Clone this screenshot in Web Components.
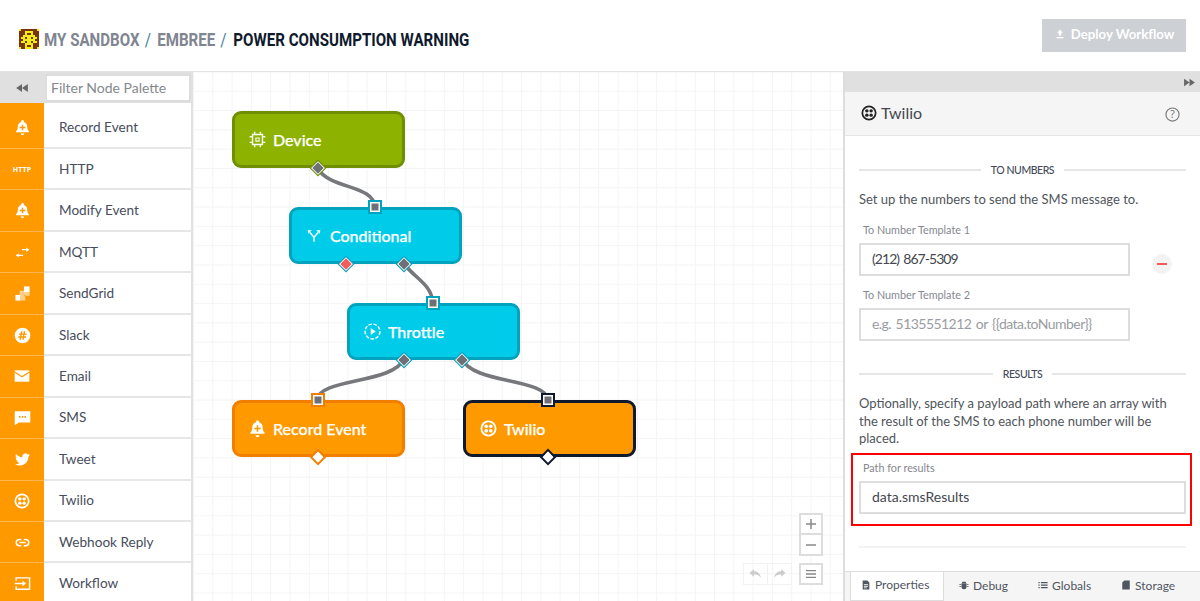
<!DOCTYPE html>
<html>
<head>
<meta charset="utf-8">
<title>Power Consumption Warning</title>
<style>
  html, body { margin: 0; height: 100%; overflow: hidden; background: #fff; }
  body { font-family: "Lato", "Noto Sans", sans-serif; }
</style>
</head>
<body>
<workflow-app></workflow-app>

<script>
// Icon set shared by the palette, nodes and panels (24x24 boxes)
const ICONS = {
  bell: '<path fill="currentColor" fill-rule="evenodd" d="M12 1.500a2 2 0 0 1 2 2v.6c3 .9 4.600 3.500 4.600 6.600 0 3.400.8 5.200 2.400 6.600v1.400H3v-1.400c1.600-1.400 2.400-3.200 2.400-6.600 0-3.100 1.600-5.700 4.600-6.600v-.6a2 2 0 0 1 2-2zM11 8v3H8v2h3v3h2v-3h3v-2h-3V8z"/><path fill="currentColor" d="M9.500 20.500h5a2.500 2.500 0 0 1-5 0z"/>',
  arrows: '<path fill="currentColor" d="M11 6.500h7V4l5 3.500L18 11V8.500h-7zM13 15.500H6V13l-5 3.500L6 20v-2.500h7z"/>',
  sendgrid: '<path fill="currentColor" d="M14 2h8v8h-8z"/><path fill="currentColor" opacity=".55" d="M8 8h6v7H8zM14 10h8v5h-6v-1h-2z"/><path fill="currentColor" d="M2 14h7v8H2z"/><path fill="currentColor" opacity=".55" d="M9 15h7v7H9z"/>',
  slack: '<path fill="currentColor" fill-rule="evenodd" d="M12 1a11 11 0 1 1 0 22 11 11 0 0 1 0-22zM10 6l-.6 3H7v2h2l-.4 2H6v2h2.200L7.700 18h2l.5-3h2l-.5 3h2l.5-3H17v-2h-2.400l.4-2H18V9h-2.600l.6-3h-2l-.6 3h-2l.6-3zm1 5h2l-.4 2h-2z"/>',
  mail: '<path fill="currentColor" d="M1 3.500h22v17H1z"/><path fill="none" stroke="#ff9900" stroke-width="1.800" d="M1 6l11 7 11-7"/>',
  chat: '<path fill="currentColor" fill-rule="evenodd" d="M1 3h22v16H7l-6 4zM7 10v2.200h2.200V10zm3.900 0v2.200h2.200V10zm3.900 0v2.200H17V10z"/>',
  twitter: '<path fill="currentColor" d="M23.953 4.570a10 10 0 01-2.825.775 4.958 4.958 0 002.163-2.723c-.951.555-2.005.959-3.127 1.184a4.920 4.920 0 00-8.384 4.482C7.690 8.095 4.067 6.130 1.640 3.162a4.822 4.822 0 00-.666 2.475c0 1.710.870 3.213 2.188 4.096a4.904 4.904 0 01-2.228-.616v.060a4.923 4.923 0 003.946 4.827 4.996 4.996 0 01-2.212.085 4.936 4.936 0 004.604 3.417 9.867 9.867 0 01-6.102 2.105c-.390 0-.779-.023-1.170-.067a13.995 13.995 0 007.557 2.209c9.053 0 13.998-7.496 13.998-13.985 0-.210 0-.420-.015-.630A9.935 9.935 0 0024 4.590z"/>',
  twilio: '<circle cx="12" cy="12" r="10" fill="none" stroke="currentColor" stroke-width="2.600"/><g fill="currentColor"><circle cx="8.800" cy="8.800" r="2.600"/><circle cx="15.200" cy="8.800" r="2.600"/><circle cx="8.800" cy="15.200" r="2.600"/><circle cx="15.200" cy="15.200" r="2.600"/></g>',
  link: '<path fill="none" stroke="currentColor" stroke-width="2.400" d="M10 7H7a5 5 0 0 0 0 10h3M14 7h3a5 5 0 0 1 0 10h-3M7 12h10"/>',
  workflow: '<path fill="none" stroke="currentColor" stroke-width="2" d="M3 8V4h19v16H3v-4"/><path fill="currentColor" d="M1 11h11V8l5 4-5 4v-3H1z"/>',
  chip: '<path fill="none" stroke="currentColor" stroke-width="2" d="M5 5h14v14H5z"/><path fill="currentColor" d="M9 9h6v6H9zM7 1h2v3H7zM15 1h2v3h-2zM7 20h2v3H7zM15 20h2v3h-2zM1 7h3v2H1zM1 15h3v2H1zM20 7h3v2h-3zM20 15h3v2h-3z"/><path fill="#8db300" d="M10.500 10.500h3v3h-3z"/>',
  split: '<path fill="none" stroke="currentColor" stroke-width="2.400" d="M12 22v-8L5 6M12 14l7-8"/><path fill="currentColor" d="M1 2h7L2.500 8zM23 2h-7l5.500 6z"/>',
  throttle: '<circle cx="12" cy="12" r="10.500" fill="none" stroke="currentColor" stroke-width="2" stroke-dasharray="5 2.200"/><path fill="currentColor" d="M9.500 7l7 5-7 5z"/>',
  upload: '<path fill="currentColor" d="M12 3l6 6.500h-3.500V15h-5V9.500H6zM5 18h14v2.500H5z"/>',
  rewind: '<path fill="currentColor" d="M12 5v14L2 12zM22 5v14l-10-7z"/>',
  forward: '<path fill="currentColor" d="M2 5v14l10-7zM12 5v14l10-7z"/>',
  doc: '<path fill="currentColor" fill-rule="evenodd" d="M4 1h11l5 5v17H4zM7 10v2h10v-2zm0 4v2h10v-2zm0 4v2h7v-2z"/>',
  bug: '<path fill="currentColor" d="M8 4h8l1 3H7zM6 8h12v8a6 6 0 0 1-12 0zM1 10h4v2H1zM19 10h4v2h-4zM1 15h4v2H1zM19 15h4v2h-4z"/>',
  list: '<path fill="currentColor" d="M1 5h3v2.500H1zM7 5h16v2.500H7zM1 11h3v2.500H1zM7 11h16v2.500H7zM1 17h3v2.500H1zM7 17h16v2.500H7z"/>',
  card: '<path fill="currentColor" d="M8 1h13v22H3V6z"/>',
  undo: '<path fill="currentColor" d="M9 6V2L1 9l8 7v-4c5-.5 9 .5 13 6-1-7-6-12-13-12z"/>',
  redo: '<path fill="currentColor" d="M15 6V2l8 7-8 7v-4c-5-.5-9 .5-13 6 1-7 6-12 13-12z"/>'
};

class NodeIcon extends HTMLElement {
  connectedCallback() {
    const size = this.getAttribute('size') || 16;
    this.attachShadow({ mode: 'open' }).innerHTML = `
      <style>
        :host { display: inline-flex; width: ${size}px; height: ${size}px; flex: none; }
        svg { width: 100%; height: 100%; display: block; }
      </style>
      <svg viewBox="0 0 24 24">${ICONS[this.getAttribute('name')] || ''}</svg>`;
  }
}

class AppHeader extends HTMLElement {
  connectedCallback() {
    // pixel avatar for the sandbox, 10x10 cells
    const cells = ['y........y', '...yyyy...', '...y..y...', '..yyyyyy..', '.yy.yy.yy.', '..yyyyyy..', '.yy.yy.yy.', '...yyyy...', '...y..y...', 'y..yyyy..y'];
    const rects = cells.map((row, y) => [...row].map((c, x) => c === 'y' ? `<rect x="${x}" y="${y}" width="1" height="1"/>` : '').join('')).join('');
    this.attachShadow({ mode: 'open' }).innerHTML = `
      <style>
        :host {
          display: flex; align-items: center; height: 71px; box-sizing: content-box;
          padding: 0 14px 0 19px; border-bottom: 1px solid #e4e4e4;
        }
        .avatar { width: 20px; height: 20px; margin: 7px 5px 0 0; flex: none; }
        .crumbs {
          display: flex; align-items: center; flex: 1; margin-top: 7px;
          font: 700 18px "Roboto", sans-serif; transform: scaleX(.84); transform-origin: 0 50%;
          color: #7f8591;
        }
        .sep { color: #3f7f9e; margin: 0 7.500px 0 6px; font-weight: 400; }
        .sep.end { margin-right: 8px; }
        .last { color: #0f1a2e; }
        button {
          display: flex; align-items: center; gap: 2px; justify-content: center;
          width: 144px; height: 33px; margin-top: -1px; border: 0; padding: 0 0 2px;
          background: #cdd0d4; color: #fff;
          font: 700 13.200px "Lato", sans-serif;
        }
      </style>
      <svg class="avatar" viewBox="0 0 10 10" shape-rendering="crispEdges"><rect width="10" height="10" fill="#7a3505"/><g fill="#f2ee1a">${rects}</g></svg>
      <div class="crumbs">
        <span>MY SANDBOX</span><span class="sep">/</span>
        <span>EMBREE</span><span class="sep end">/</span>
        <span class="last">POWER CONSUMPTION WARNING</span>
      </div>
      <button><node-icon name="upload" size="12"></node-icon>&nbsp;Deploy Workflow</button>`;
  }
}

class PaletteItem extends HTMLElement {
  connectedCallback() {
    const icon = this.getAttribute('icon');
    this.attachShadow({ mode: 'open' }).innerHTML = `
      <style>
        :host {
          display: grid; grid-template-columns: 44px 1fr; align-items: stretch;
          height: 41.45px; box-sizing: border-box;
          border-bottom: 2px solid #e6e6e6;
          font-size: 13.600px; color: #474d5c;
        }
        .icon {
          display: flex; align-items: center; justify-content: center;
          background: #ff9900; color: #fff; margin-bottom: -2px; border-bottom: 1px solid #ffb84d;
          font: 700 7px "Noto Sans", sans-serif; letter-spacing: .2px;
        }
        .name { display: flex; align-items: center; padding-left: 15px; }
      </style>
      <div class="icon">${icon === 'http' ? 'HTTP' : `<node-icon name="${icon}" size="${this.getAttribute('size') || 16}"></node-icon>`}</div>
      <div class="name"><slot></slot></div>`;
  }
}

class NodePalette extends HTMLElement {
  connectedCallback() {
    this.attachShadow({ mode: 'open' }).innerHTML = `
      <style>
        :host {
          display: flex; flex-direction: column; width: 193px; box-sizing: border-box;
          border-right: 2px solid #e2e2e2; overflow: hidden; background: #fff;
        }
        .top { display: flex; height: 31px; background: #e0e0e0; flex: none; }
        .toggle { display: flex; align-items: center; justify-content: center; width: 44px; color: #666; }
        .filter {
          flex: 1; min-width: 0; margin: 2px 0 0 1px; height: 28px; box-sizing: border-box; background: #fff;
          border: 2px solid #ddd; padding: 0 4px; line-height: 23px;
          font-size: 14px; color: #85888f; white-space: nowrap; overflow: hidden;
        }
        .list { padding-top: 4.600px; background: linear-gradient(90deg, #ff9900 44px, #fff 44px); }
      </style>
      <div class="top">
        <div class="toggle"><node-icon name="rewind" size="14"></node-icon></div>
        <div class="filter">Filter Node Palette</div>
      </div>
      <div class="list"><slot></slot></div>`;
  }
}

// a node of the diagram: its place on the canvas is given by x / y
class FlowNode extends HTMLElement {
  connectedCallback() {
    const x = this.getAttribute('x'), y = this.getAttribute('y');
    const ports = JSON.parse(this.getAttribute('ports') || '[]');
    const html = ports.map(p => `<span class="port ${p.type}" style="left:${p.at}px"></span>`).join('');
    this.attachShadow({ mode: 'open' }).innerHTML = `
      <style>
        :host {
          position: absolute; left: ${x}px; top: ${y}px; width: 173px; height: 57px;
          box-sizing: border-box; border-radius: 9px; border: 3px solid var(--edge);
          background: var(--fill); color: #fff;
          display: flex; align-items: center; gap: 8px; padding: 0 0 0 14px;
          font-size: 16px; font-weight: 500; -webkit-text-stroke: .25px #fff;
        }
        :host([kind=device]) { --fill: #8db300; --edge: #6f8e00; }
        :host([kind=logic]) { --fill: #00ccea; --edge: #00a3bd; }
        :host([kind=output]) { --fill: #ff9900; --edge: #f27e00; }
        :host([kind=selected]) { --fill: #ff9900; --edge: #0f1a2e; }
        .ico { display: flex; justify-content: center; width: 16px; }
        .port { position: absolute; box-sizing: border-box; background: #6f7075; }
        .in {
          top: -10px; width: 14px; height: 14px; margin-left: -7px;
          border: 2px solid var(--edge); box-shadow: inset 0 0 0 1.500px #fff;
        }
        .out {
          bottom: -8px; width: 10px; height: 10px; margin-left: -5px; transform: rotate(45deg);
          border: 1px solid #fff; outline: 1px solid var(--edge);
        }
        .out.free {
          background: #fff; border: 0; width: 8px; height: 8px; bottom: -7px; margin-left: -4px;
          outline-width: 2px;
        }
        .fail { background: #f25c5c; }
      </style>
      <span class="ico"><node-icon name="${this.getAttribute('icon')}" size="${this.getAttribute('icon-size') || 16}"></node-icon></span>
      <span><slot></slot></span>
      ${html}`;
  }
}

class CanvasControls extends HTMLElement {
  connectedCallback() {
    this.attachShadow({ mode: 'open' }).innerHTML = `
      <style>
        :host {
          position: absolute; right: 20px; bottom: 16px;
          display: flex; align-items: flex-end; gap: 7px; color: #888;
        }
        .col { display: flex; flex-direction: column; gap: 7px; }
        .btn {
          width: 24px; height: 22px; box-sizing: border-box; border: 2px solid #ddd; background: #fff;
          display: flex; align-items: center; justify-content: center;
        }
        .zoom { display: flex; flex-direction: column; }
        .zoom .btn + .btn { margin-top: -2px; height: 23px; }
        .history { display: flex; color: #ccc; }
        .history .btn { border: 1px solid #f2f2f2; background: transparent; width: 25px; }
        .history .btn + .btn { margin-left: -1px; }
        svg { width: 12px; height: 12px; }
      </style>
      <div class="history">
        <div class="btn"><node-icon name="undo" size="13"></node-icon></div>
        <div class="btn"><node-icon name="redo" size="13"></node-icon></div>
      </div>
      <div class="col">
        <div class="zoom">
          <div class="btn"><svg viewBox="0 0 12 12"><path fill="currentColor" d="M5.250 1h1.500v10h-1.500zM1 5.250h10v1.500H1z"/></svg></div>
          <div class="btn"><svg viewBox="0 0 12 12"><path fill="currentColor" d="M1 5.250h10v1.500H1z"/></svg></div>
        </div>
        <div class="btn"><svg viewBox="0 0 12 12"><path fill="currentColor" d="M1 2h10v1.300H1zM1 5.350h10v1.300H1zM1 8.700h10V10H1z"/></svg></div>
      </div>`;
  }
}

class FlowCanvas extends HTMLElement {
  connectedCallback() {
    this.attachShadow({ mode: 'open' }).innerHTML = `
      <style>
        :host {
          display: block; position: relative; flex: 1; min-width: 0; overflow: hidden;
          background-color: #fff;
          background-image: linear-gradient(#f4f4f4 1px, transparent 1px), linear-gradient(90deg, #f4f4f4 1px, transparent 1px);
          background-size: 19.3px 19.3px; background-position: 0 -0.500px;
        }
        svg { position: absolute; inset: 0; width: 100%; height: 100%; }
      </style>
      <svg fill="none" stroke="#77787c" stroke-width="3.600" stroke-linecap="round">
        <path d="M124 96C138 118 180 112 182 135"/>
        <path d="M211 192C224 208 238 212 240 231"/>
        <path d="M211 287C200 312 126 306 124 328"/>
        <path d="M269 287C280 312 353 306 355 328"/>
      </svg>
      <slot></slot>
      <canvas-controls></canvas-controls>`;
  }
}

class SectionTitle extends HTMLElement {
  connectedCallback() {
    this.attachShadow({ mode: 'open' }).innerHTML = `
      <style>
        :host {
          display: flex; align-items: center; gap: 10px; height: 16px;
          font-size: 10.500px; font-weight: 500; letter-spacing: -.45px; color: #444a58;
        }
        :host::before, :host::after { content: ""; flex: 1; height: 2px; background: #e6e6e6; }
      </style>
      <slot></slot>`;
  }
}

class TextField extends HTMLElement {
  connectedCallback() {
    const value = this.getAttribute('value');
    const spacing = this.getAttribute('spacing') || 0;
    this.attachShadow({ mode: 'open' }).innerHTML = `
      <style>
        :host { display: block; }
        label { display: block; padding-left: 4px; height: 21px; font-size: 10.800px; line-height: 16px; color: #85888f; }
        .box {
          box-sizing: border-box; height: 33px; border: 2px solid #ddd; padding: 0 11px;
          line-height: 28px; font-size: 14px; letter-spacing: ${spacing}px; word-spacing: 1.500px; color: #44474f; white-space: nowrap; overflow: hidden;
        }
        .hint { color: #999ca2; }
      </style>
      <label>${this.getAttribute('label')}</label>
      <div class="box ${value ? '' : 'hint'}">${value || this.getAttribute('placeholder') || ''}</div>`;
  }
}

class PanelTabs extends HTMLElement {
  connectedCallback() {
    const tabs = [['doc', 'Properties'], ['bug', 'Debug'], ['list', 'Globals'], ['card', 'Storage']];
    this.attachShadow({ mode: 'open' }).innerHTML = `
      <style>
        :host {
          display: flex; height: 30px; box-sizing: border-box; padding-left: 5px;
          background: #f5f5f5; border-top: 1px solid #ddd; flex: none;
        }
        .tab {
          display: flex; align-items: center; gap: 4px; height: 29px; padding: 0 15px 3px;
          font-size: 12px; color: #50555f; box-sizing: border-box;
        }
        .tab.active {
          width: 94px; padding-left: 10px; padding-right: 0; background: #fff;
          border: 1px solid #ddd; border-top: 0;
        }
      </style>
      ${tabs.map((t, i) => `<div class="tab ${i === 0 ? 'active' : ''}"><node-icon name="${t[0]}" size="10"></node-icon>${t[1]}</div>`).join('')}`;
  }
}

class SidePanel extends HTMLElement {
  connectedCallback() {
    this.attachShadow({ mode: 'open' }).innerHTML = `
      <style>
        :host {
          display: flex; flex-direction: column; width: 357px; box-sizing: border-box; flex: none;
          border-left: 2px solid #ddd; background: #fff;
        }
        .strip {
          height: 20px; background: #e0e0e0; color: #666; flex: none;
          display: flex; align-items: center; justify-content: flex-end; padding-right: 4px;
        }
        .head {
          height: 44px; box-sizing: border-box; flex: none; background: #f5f5f5; border-bottom: 1px solid #e6e6e6;
          display: flex; align-items: center; gap: 4px; padding: 0 20px 2px 16px;
          font-size: 16px; color: #44474f;
        }
        .head span { flex: 1; }
        .help { color: #777; width: 15px; height: 15px; margin-top: 3px; }
        .body { flex: 1; min-height: 0; padding: 26px 14px 0 14px; font-size: 13px; color: #50555b; }
        p { margin: 0; line-height: 17.300px; }
        .intro { margin-top: 13px; }
        .row { display: flex; align-items: flex-end; margin-top: 14px; }
        .row text-field { width: 271px; }
        .minus {
          width: 20px; height: 20px; border-radius: 50%; background: #f3f3f3; margin: 0 0 2px 22px;
          display: flex; align-items: center; justify-content: center;
        }
        .minus i { display: block; width: 10px; height: 2px; background: #f55; }
        .second { margin-top: 11px; }
        .second text-field { width: 271px; display: block; }
        section-title { margin-top: 25px; }
        .results { margin-top: 13px; }
        .mark { margin: 6px -6px 0 -8px; padding: 5px 4px 10px 6px; border: 2px solid #f00; }
        hr { border: 0; height: 2px; background: #f3f3f3; margin: 20px 0 0; }
      </style>
      <div class="strip"><node-icon name="forward" size="13"></node-icon></div>
      <div class="head">
        <node-icon name="twilio" size="16" style="color:#222"></node-icon>
        <span>Twilio</span>
        <svg class="help" viewBox="0 0 16 16"><circle cx="8" cy="8" r="7" fill="none" stroke="currentColor" stroke-width="1.200"/><text x="8" y="12" text-anchor="middle" font-size="11" font-family="Noto Sans" fill="currentColor">?</text></svg>
      </div>
      <div class="body">
        <section-title style="margin-top:0">TO NUMBERS</section-title>
        <p class="intro">Set up the numbers to send the SMS message to.</p>
        <div class="row">
          <text-field label="To Number Template 1" value="(212) 867-5309" spacing="-.95"></text-field>
          <div class="minus"><i></i></div>
        </div>
        <div class="second"><text-field label="To Number Template 2" placeholder="e.g. 5135551212 or {{data.toNumber}}" spacing="-.55"></text-field></div>
        <section-title>RESULTS</section-title>
        <p class="results">Optionally, specify a payload path where an array with the result of the SMS to each phone number will be placed.</p>
        <div class="mark"><text-field label="Path for results" value="data.smsResults"></text-field></div>
        <hr>
      </div>
      <panel-tabs></panel-tabs>`;
  }
}

class WorkflowApp extends HTMLElement {
  connectedCallback() {
    const items = [['bell', 'Record Event', 17], ['http', 'HTTP'], ['bell', 'Modify Event', 17], ['arrows', 'MQTT', 15], ['sendgrid', 'SendGrid', 17], ['slack', 'Slack', 17], ['mail', 'Email', 16], ['chat', 'SMS', 17], ['twitter', 'Tweet', 15], ['twilio', 'Twilio', 16], ['link', 'Webhook Reply', 15], ['workflow', 'Workflow', 17]];
    this.attachShadow({ mode: 'open' }).innerHTML = `
      <style>
        :host { display: flex; flex-direction: column; height: 601px; overflow: hidden; }
        .main { display: flex; flex: 1; min-height: 0; }
      </style>
      <app-header></app-header>
      <div class="main">
        <node-palette>
          ${items.map(i => `<palette-item icon="${i[0]}" size="${i[2] || 16}">${i[1]}</palette-item>`).join('')}
        </node-palette>
        <flow-canvas>
          <flow-node kind="device" icon="chip" icon-size="17" x="39" y="39" ports='[{"type":"out","at":83}]'>Device</flow-node>
          <flow-node kind="logic" icon="split" icon-size="14" x="96" y="135" ports='[{"type":"in","at":83},{"type":"out fail","at":54},{"type":"out","at":112}]'>Conditional</flow-node>
          <flow-node kind="logic" icon="throttle" icon-size="17" x="154" y="231" ports='[{"type":"in","at":83},{"type":"out","at":54},{"type":"out","at":112}]'>Throttle</flow-node>
          <flow-node kind="output" icon="bell" icon-size="19" x="39" y="328" ports='[{"type":"in","at":83},{"type":"out free","at":83}]'>Record Event</flow-node>
          <flow-node kind="selected" icon="twilio" icon-size="17" x="270" y="328" ports='[{"type":"in","at":82},{"type":"out free","at":82}]'>Twilio</flow-node>
        </flow-canvas>
        <side-panel></side-panel>
      </div>`;
  }
}

customElements.define('node-icon', NodeIcon);
customElements.define('app-header', AppHeader);
customElements.define('palette-item', PaletteItem);
customElements.define('node-palette', NodePalette);
customElements.define('flow-node', FlowNode);
customElements.define('canvas-controls', CanvasControls);
customElements.define('flow-canvas', FlowCanvas);
customElements.define('section-title', SectionTitle);
customElements.define('text-field', TextField);
customElements.define('panel-tabs', PanelTabs);
customElements.define('side-panel', SidePanel);
customElements.define('workflow-app', WorkflowApp);
</script>
</body>
</html>
